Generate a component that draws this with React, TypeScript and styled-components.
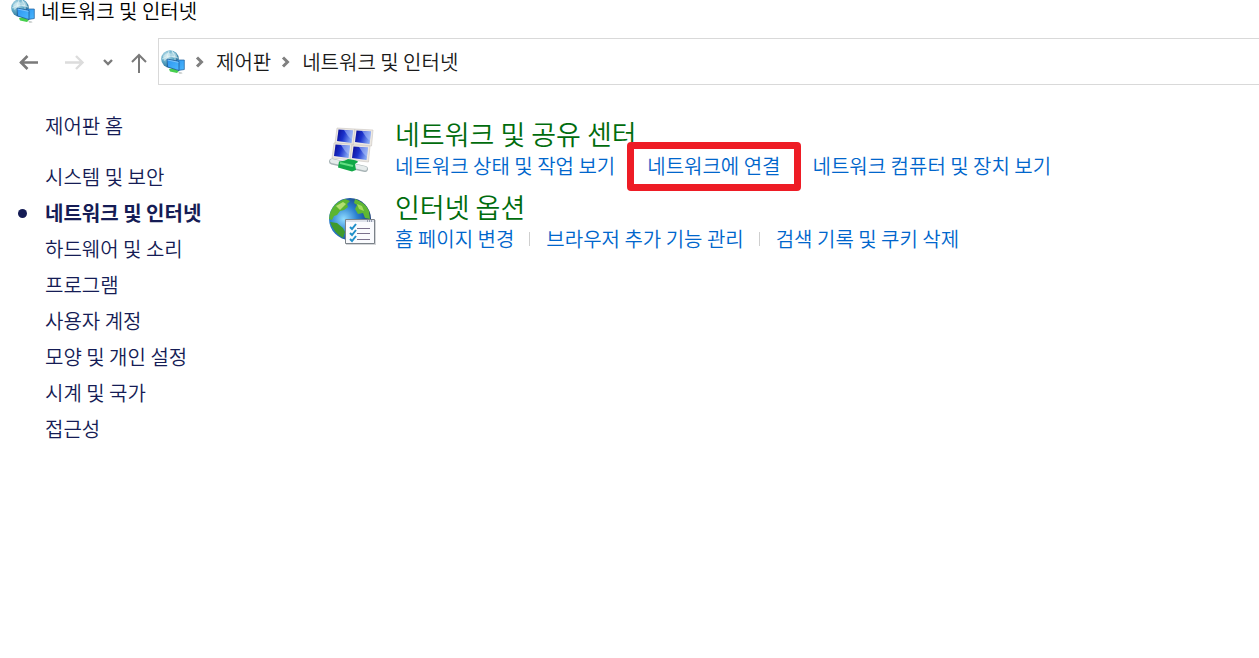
import React from "react";
import styled, { createGlobalStyle, css } from "styled-components";

const GlobalStyle = createGlobalStyle`
  * { box-sizing: border-box; }
  body {
    margin: 0;
    background: #fff;
    color: #000;
    font-family: "Noto Sans CJK KR", sans-serif;
    font-size: 20px;
    font-weight: 350;
    line-height: 24px;
  }
  ul { list-style: none; margin: 0; padding: 0; }
  a { text-decoration: none; color: inherit; white-space: nowrap; }
  svg { display: block; flex: none; }
`;

const Page = styled.div`
  display: flex;
  flex-direction: column;
  min-height: 100vh;
  overflow-x: hidden;
`;

const TitleBar = styled.header`
  display: flex;
  align-items: center;
  gap: 6px;
  height: 22px;
  padding-left: 11px;
`;

const Title = styled.h1`
  margin: 0;
  font-size: 20px;
  font-weight: 350;
  line-height: 22px;
`;

const NavBar = styled.div`
  display: flex;
  align-items: center;
  margin-top: 16px;
`;

const NavButtons = styled.div`
  display: flex;
  align-items: center;
  gap: 6px;
  padding: 0 2px 0 8px;
`;

const buttonWidths = { wide: 40, medium: 34, narrow: 16 };

const NavButton = styled.button<{ $size: keyof typeof buttonWidths }>`
  display: grid;
  place-items: center;
  place-content: center;
  width: ${(p) => buttonWidths[p.$size]}px;
  height: 24px;
  padding: 0;
  border: 0;
  background: none;
  color: #7a7a7a;
  &:disabled { color: #dcdcdc; }
`;

const AddressBar = styled.nav`
  display: flex;
  flex: 1;
  align-items: center;
  height: 47px;
  padding-left: 2px;
  border: 1px solid #d9d9d9;
  border-right: 0;
`;

const Crumbs = styled.ul`
  display: flex;
`;

const Crumb = styled.li`
  display: flex;
  align-items: center;
  gap: 11px;
  padding-left: 10px;
  color: #1a1a1a;
`;

const Body = styled.div`
  display: flex;
  padding-top: 29px;
`;

const Sidebar = styled.nav`
  flex: none;
  width: 328px;
  padding-left: 45px;
  color: #151c55;
`;

const HomeLink = styled.a`
  display: block;
  margin-bottom: 27px;
`;

const Categories = styled.ul`
  display: flex;
  flex-direction: column;
  gap: 12px;
`;

const Category = styled.li<{ $current?: boolean }>`
  position: relative;
  ${(p) =>
    p.$current &&
    css`
      font-weight: 700;
      &::before {
        content: "";
        position: absolute;
        left: -27px;
        top: 8px;
        width: 9px;
        height: 9px;
        border-radius: 50%;
        background: #151c55;
      }
    `}
`;

const Main = styled.main`
  display: flex;
  flex: 1;
  flex-direction: column;
  gap: 9px;
`;

const Section = styled.section`
  display: flex;
  gap: 19px;
`;

const SectionIcon = styled.div`
  flex: none;
  width: 48px;
  padding-top: 10px;
`;

const SectionTitle = styled.h2`
  margin: 0;
  font-size: 27px;
  font-weight: 350;
  line-height: 40px;
  color: #006c0d;
`;

const Tasks = styled.ul`
  display: flex;
`;

const Task = styled.li`
  position: relative;
  display: flex;
  align-items: center;
  color: #0066cc;
  & + &::before {
    content: "";
    width: 1px;
    height: 14px;
    margin: 0 16px 0 15px;
    background: #cfcfcf;
  }
`;

const Highlight = styled.span`
  position: absolute;
  z-index: 1;
  inset: -12px -20px -13px 12px;
  border: 7px solid #ee1c25;
  border-radius: 4px;
  pointer-events: none;
`;

const NetworkGlobe = () => (
  <svg width="24" height="24" viewBox="0 0 24 24" aria-hidden="true">
    <defs>
      <radialGradient id="ng" cx=".35" cy=".3" r=".8">
        <stop offset="0" stopColor="#c9e6ef" />
        <stop offset=".5" stopColor="#5aa6c4" />
        <stop offset="1" stopColor="#27688e" />
      </radialGradient>
      <linearGradient id="ns" x1="0" y1="0" x2="1" y2="1">
        <stop offset="0" stopColor="#2b94ee" />
        <stop offset="1" stopColor="#4db9ff" />
      </linearGradient>
    </defs>
    <circle cx="9" cy="9" r="8.8" fill="url(#ng)" />
    <path d="M2 6Q7 1 10 4L8 8 3 11zM11 1q5 2 5 6l-4 1-2-3z" fill="#d9eef2" opacity=".6" />
    <path d="M1 9q8-5 16-1M8 1q-4 8 1 16M11 1q5 6 2 15" fill="none" stroke="#e8f5f7" strokeWidth=".8" opacity=".8" />
    <path d="M8 19l4-1 6 3-2 2-7-1.500z" fill="#46cf4d" />
    <path d="M17 21.500l4 1 .5 1-3 .5z" fill="#c7cccb" />
    <path d="M15 10l8.300 0V19.500L17 20.500z" fill="url(#ns)" stroke="#1b5c9b" strokeWidth=".7" />
    <path d="M6 9L18 11.500v9L6.500 17z" fill="url(#ns)" stroke="#174f86" strokeWidth=".7" />
    <path d="M6.500 10L17.500 12.300" stroke="#9cd4ff" strokeWidth=".7" />
  </svg>
);

const Pane = ({ x, y }: { x: number; y: number }) => (
  <g transform={`translate(${x} ${y})`}>
    <path d="M2 0l18 1-1.500 16L0 15z" fill="#ece8e2" stroke="#c9c5c0" strokeWidth=".6" />
    <path d="M3.500 1.500l14.500 1L16.500 15l-14.500-2z" fill="url(#pane)" />
    <path d="M9 2l9 .5L16.800 12 13 8z" fill="#a9c0fa" opacity=".6" />
  </g>
);

const NetworkCenterIcon = () => (
  <svg width="48" height="48" viewBox="0 0 48 48" aria-hidden="true">
    <defs>
      <linearGradient id="pane" x1="0" y1="0" x2="1" y2=".3">
        <stop offset="0" stopColor="#0a0a91" />
        <stop offset=".5" stopColor="#1b32cc" />
        <stop offset="1" stopColor="#7fa2f2" />
      </linearGradient>
    </defs>
    <Pane x={7} y={4} />
    <Pane x={25} y={5} />
    <Pane x={4} y={19} />
    <Pane x={22} y={21} />
    <path d="M4 37.500L37 45" stroke="#a9b5b7" strokeWidth="6" strokeLinecap="round" />
    <path d="M4 37L37 44.500" stroke="#e5ebeb" strokeWidth="4" strokeLinecap="round" />
    <path d="M11 37.500q7-1 9-2.500l6 1q4 1 4 2l-3 2 1 6-4 1.500-14-4z" fill="#12a847" />
    <path d="M12 39l13 3" stroke="#63df83" strokeWidth="2" />
  </svg>
);

const InternetOptionsIcon = () => (
  <svg width="48" height="48" viewBox="0 0 48 48" aria-hidden="true">
    <defs>
      <radialGradient id="globe" cx=".35" cy=".5" r=".65">
        <stop offset="0" stopColor="#8fdcff" />
        <stop offset=".5" stopColor="#2b7fd0" />
        <stop offset="1" stopColor="#153a78" />
      </radialGradient>
    </defs>
    <circle cx="22" cy="22" r="21" fill="url(#globe)" />
    <path d="M2 16Q6 5 17 2l5 2-3 3 1 3-4 3-4 1-3 4-3 1-2 4-3-1z" fill="#5cb531" />
    <path d="M8 9l7-4 3 2-6 6z" fill="#b3df72" />
    <path d="M27 2q11 4 14 12l1 8-5-1-2-5-5 1-3-5 2-4-3-2z" fill="#5fb733" />
    <path d="M29 7l5 2 2 5-5-2z" fill="#a6db5f" />
    <path d="M2 25l7 1 6 5 2 4-2 6q-9-5-13-16z" fill="#3f9a2b" />
    <path d="M18 23h30v25H18z" fill="#808890" opacity=".35" />
    <path d="M17.500 22.500h29v24h-29z" fill="#fafbfe" stroke="#7b8289" />
    <path d="M18 23h28v2H18z" fill="#dde1ea" />
    <path d="M39 24h1m1 0h1m1 0h1" stroke="#4c5874" />
    <path d="M29 31.500h13M29 36.500h13M29 42.500h13" stroke="#7a718d" />
    <path d="M22 30l2 2 4-5M22 36l2 2 4-5M22 42l2 2 4-5" fill="none" stroke="#1f8fc9" strokeWidth="2" />
  </svg>
);

const Arrow = ({ d, width = 2 }: { d: string; width?: number }) => (
  <svg width="24" height="24" viewBox="0 0 24 24" fill="none" stroke="currentColor" strokeWidth={width} aria-hidden="true">
    <path d={d} />
  </svg>
);

const Chevron = () => (
  <svg width="10" height="12" viewBox="0 0 10 12" fill="none" stroke="#808080" strokeWidth="3" aria-hidden="true">
    <path d="M2 1.500l4.500 4.500L2 10.500" />
  </svg>
);

const categories = [
  "시스템 및 보안",
  "네트워크 및 인터넷",
  "하드웨어 및 소리",
  "프로그램",
  "사용자 계정",
  "모양 및 개인 설정",
  "시계 및 국가",
  "접근성",
];
const current = "네트워크 및 인터넷";

const sections = [
  {
    title: "네트워크 및 공유 센터",
    icon: <NetworkCenterIcon />,
    tasks: ["네트워크 상태 및 작업 보기", "네트워크에 연결", "네트워크 컴퓨터 및 장치 보기"],
  },
  {
    title: "인터넷 옵션",
    icon: <InternetOptionsIcon />,
    tasks: ["홈 페이지 변경", "브라우저 추가 기능 관리", "검색 기록 및 쿠키 삭제"],
  },
];
const highlighted = "네트워크에 연결";

export default function App() {
  return (
    <Page>
      <GlobalStyle />
      <TitleBar>
        <NetworkGlobe />
        <Title>{current}</Title>
      </TitleBar>
      <NavBar>
        <NavButtons>
          <NavButton aria-label="뒤로" $size="wide"><Arrow d="M22 12.500H4M11.500 6L5 12.500l6.500 6.500" width={2.6} /></NavButton>
          <NavButton aria-label="앞으로" $size="wide" disabled><Arrow d="M3 12.500h18M14 6l6.500 6.500L14 19" width={2.4} /></NavButton>
          <NavButton aria-label="최근 위치" $size="narrow"><Arrow d="M8 10l4 4 4-4" width={2.4} /></NavButton>
          <NavButton aria-label="위로" $size="medium"><Arrow d="M12 23V5M5 12l7-7 7 7" /></NavButton>
        </NavButtons>
        <AddressBar aria-label="주소">
          <NetworkGlobe />
          <Crumbs>
            {["제어판", current].map((name) => (
              <Crumb key={name}>
                <Chevron />
                <a href="#">{name}</a>
              </Crumb>
            ))}
          </Crumbs>
        </AddressBar>
      </NavBar>
      <Body>
        <Sidebar>
          <HomeLink href="#">제어판 홈</HomeLink>
          <Categories>
            {categories.map((name) => (
              <Category key={name} $current={name === current}>
                <a href="#">{name}</a>
              </Category>
            ))}
          </Categories>
        </Sidebar>
        <Main>
          {sections.map((s) => (
            <Section key={s.title}>
              <SectionIcon>{s.icon}</SectionIcon>
              <div>
                <SectionTitle><a href="#">{s.title}</a></SectionTitle>
                <Tasks>
                  {s.tasks.map((t) => (
                    <Task key={t}>
                      <a href="#">{t}</a>
                      {t === highlighted && <Highlight />}
                    </Task>
                  ))}
                </Tasks>
              </div>
            </Section>
          ))}
        </Main>
      </Body>
    </Page>
  );
}
